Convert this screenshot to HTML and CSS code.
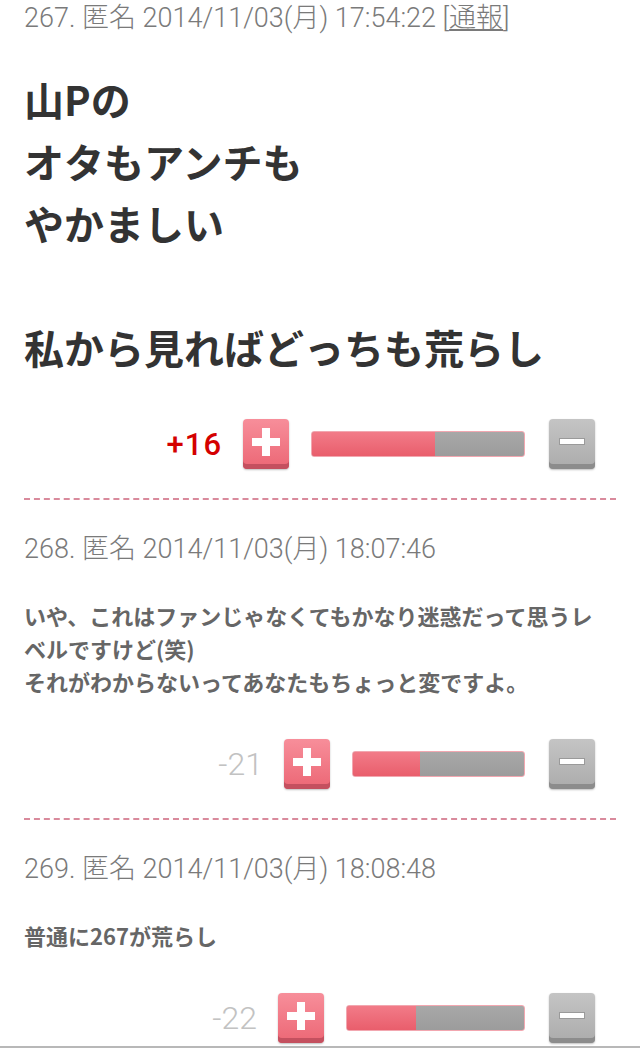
FILE: index.html
```html
<!DOCTYPE html>
<html lang="ja">
<head>
    <meta charset="UTF-8">
    <meta name="viewport" content="width=device-width, initial-scale=1.0">
    <title>コメント</title>
    <link rel="stylesheet" href="styles.css">
</head>
<body>

    <div class="thread">
        <div class="comment">
            <div class="comment-head">267. 匿名 2014/11/03(月) 17:54:22 <span class="report">[<a href="#">通報</a>]</span></div>
            <div class="comment-body comment-body-large">山Pの<br>オタもアンチも<br>やかましい<br><br>私から見ればどっちも荒らし</div>
            <div class="vote">
                <span class="vote-score vote-score-good">+16</span>
                <button type="button" class="vote-btn vote-btn-plus">
                    <svg width="28" height="28" viewBox="0 0 28 28"><path d="M10 0h8v10h10v8H18v10h-8V18H0v-8h10z" fill="#fff"/></svg>
                </button>
                <div class="vote-bar" style="width: 214px"><div class="vote-bar-fill" style="width: 58%"></div></div>
                <button type="button" class="vote-btn vote-btn-minus">
                    <svg width="26" height="7" viewBox="0 0 26 7"><rect x="0.5" y="0.5" width="25" height="6" fill="#fff" stroke="#9a9a9a"/></svg>
                </button>
            </div>
        </div>

        <div class="comment">
            <div class="comment-head">268. 匿名 2014/11/03(月) 18:07:46</div>
            <div class="comment-body">いや、これはファンじゃなくてもかなり迷惑だって思うレベルですけど(笑)<br>それがわからないってあなたもちょっと変ですよ。</div>
            <div class="vote">
                <span class="vote-score">-21</span>
                <button type="button" class="vote-btn vote-btn-plus">
                    <svg width="28" height="28" viewBox="0 0 28 28"><path d="M10 0h8v10h10v8H18v10h-8V18H0v-8h10z" fill="#fff"/></svg>
                </button>
                <div class="vote-bar" style="width: 173px"><div class="vote-bar-fill" style="width: 39%"></div></div>
                <button type="button" class="vote-btn vote-btn-minus">
                    <svg width="26" height="7" viewBox="0 0 26 7"><rect x="0.5" y="0.5" width="25" height="6" fill="#fff" stroke="#9a9a9a"/></svg>
                </button>
            </div>
        </div>

        <div class="comment">
            <div class="comment-head">269. 匿名 2014/11/03(月) 18:08:48</div>
            <div class="comment-body">普通に267が荒らし</div>
            <div class="vote">
                <span class="vote-score">-22</span>
                <button type="button" class="vote-btn vote-btn-plus">
                    <svg width="28" height="28" viewBox="0 0 28 28"><path d="M10 0h8v10h10v8H18v10h-8V18H0v-8h10z" fill="#fff"/></svg>
                </button>
                <div class="vote-bar" style="width: 179px"><div class="vote-bar-fill" style="width: 39%"></div></div>
                <button type="button" class="vote-btn vote-btn-minus">
                    <svg width="26" height="7" viewBox="0 0 26 7"><rect x="0.5" y="0.5" width="25" height="6" fill="#fff" stroke="#9a9a9a"/></svg>
                </button>
            </div>
        </div>
    </div>
    <div class="bottom-line"></div>

</body>
</html>
```

FILE: styles.css
```css
body {
    margin: 0;
    background-color: #fff;
    font-family: "Noto Sans CJK JP", sans-serif;
}
.thread {
    padding: 0 24px;
}
.comment {
    padding: 31px 0 29px;
    border-bottom: 2px dashed #d98a9c;
}
.comment:first-child {
    padding-top: 0;
}
.comment:last-child {
    padding-bottom: 3px;
    border-bottom: none;
}
.comment-head {
    font-family: Roboto, "Noto Sans CJK JP", sans-serif;
    font-weight: 300;
    font-size: 27px;
    line-height: 36px;
    color: #7a7a7a;
    white-space: nowrap;
}
.report a {
    color: #7a7a7a;
    text-decoration: underline;
}
.comment-body {
    margin-top: 32px;
    padding-right: 12px;
    font-size: 22px;
    line-height: 33px;
    font-weight: bold;
    color: #666;
}
.comment-body-large {
    font-size: 40px;
    line-height: 62px;
    color: #333;
}
.vote {
    display: flex;
    justify-content: flex-end;
    align-items: center;
    height: 50px;
    margin-top: 41px;
    padding-right: 21px;
}
.vote-score {
    margin-right: 21px;
    font-family: Roboto, sans-serif;
    font-weight: 300;
    font-size: 32px;
    color: #c2c2c2;
}
.vote-score-good {
    font-weight: 500;
    font-size: 31px;
    letter-spacing: 1px;
    color: #d40000;
}
.vote-btn {
    display: flex;
    align-items: center;
    justify-content: center;
    width: 46px;
    height: 50px;
    padding: 0 0 5px;
    border: none;
    border-radius: 4px;
    box-sizing: border-box;
    cursor: pointer;
}
.vote-btn svg {
    display: block;
}
.vote-btn-plus {
    margin-right: 22px;
    background: linear-gradient(#f78e9a, #ec6775);
    box-shadow: inset 0 -5px 0 #c4505f, 0 1px 2px rgba(0,0,0,0.25);
}
.vote-btn-minus {
    background: linear-gradient(#c4c4c4, #ababab);
    box-shadow: inset 0 -5px 0 #8c8c8c, 0 1px 2px rgba(0,0,0,0.25);
}
.vote-bar {
    display: flex;
    height: 26px;
    margin-right: 24px;
    border: 1px solid #f2a7b0;
    border-radius: 3px;
    box-sizing: border-box;
    background: linear-gradient(#a8a8a8, #9c9c9c);
    overflow: hidden;
}
.vote-bar-fill {
    height: 100%;
    background: linear-gradient(#f27b88, #e95e6c);
}
.bottom-line {
    height: 2px;
    background-color: #b8b8b8;
}
```
